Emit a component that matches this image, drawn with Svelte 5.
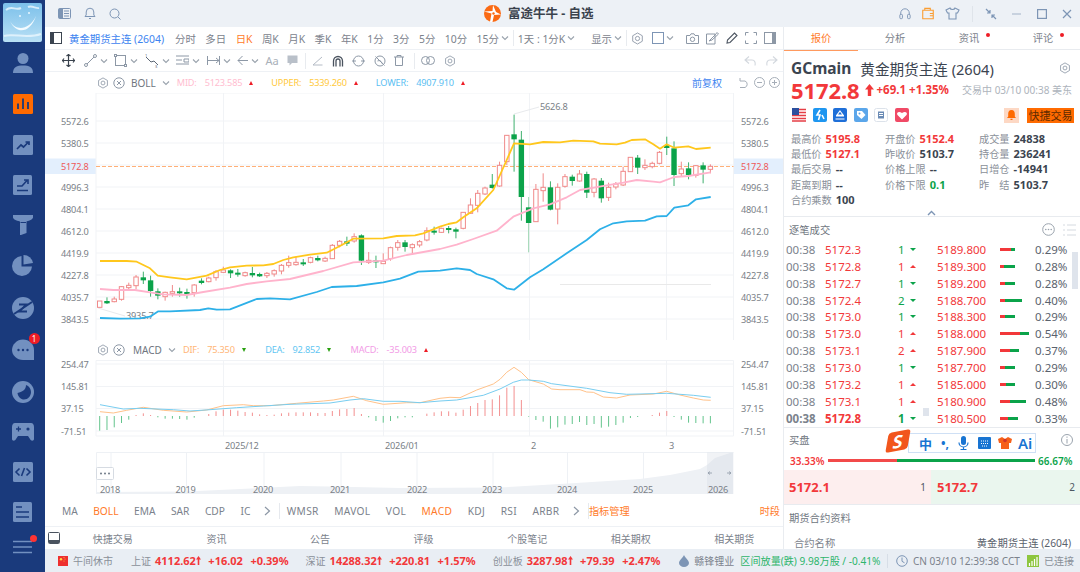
<script>
  const cx = (i) => 99.7 + 7.27 * i;
  const y1 = (z) => 100 + z / 3;
  const c = [
    ['r',603,603,622,622],['g',592,603,610,612],['r',590,597,605,607],['r',558,560,598,602],['r',548,556,563,567],['r',525,531,557,568],['g',515,532,541,552],['g',527,541,573,590],['g',565,574,587,598],['r',575,577,590,602],
    ['r',555,575,580,590],['g',563,574,580,590],['g',566,576,581,596],['r',552,555,578,590],['g',535,542,549,553],['r',530,534,545,547],['r',510,515,533,542],['r',500,510,517,519],['g',508,511,520,534],['g',507,518,524,530],
    ['r',515,518,527,530],['g',501,519,526,532],['g',518,522,529,531],['r',516,520,527,534],['r',508,512,522,530],['r',492,496,513,523],['r',467,488,496,503],['r',470,487,494,497],['g',477,487,492,498],['r',470,473,487,490],
    ['g',467,474,481,484],['r',470,475,483,486],['r',432,436,476,476],['r',420,424,436,442],['g',410,424,431,438],['r',400,410,423,428],['g',403,406,482,495],['r',456,481,487,492],['g',467,481,487,504],['r',460,484,491,491],
    ['r',440,443,476,482],['r',420,428,442,452],['g',420,427,441,455],['r',430,434,443,459],['r',420,425,435,442],['r',382,392,420,424],['g',380,392,398,404],['r',383,385,397,399],['g',378,384,388,400],['g',383,388,395,415],
    ['r',337,337,385,388],['r',295,315,340,342],['r',270,280,316,337],['r',260,264,282,285],['g',222,254,264,266],['r',185,196,258,260],['r',105,106,185,195],['g',44,103,118,215],['g',93,119,291,362],['g',291,322,369,457],
    ['r',252,268,365,366],['r',220,262,272,305],['g',244,262,329,331],['r',250,262,327,373],['r',222,230,259,263],['g',224,230,243,257],['r',210,222,243,245],['g',215,222,278,294],['r',234,237,277,292],['g',234,242,295,308],
    ['r',248,262,292,303],['r',246,252,261,268],['r',200,214,255,258],['r',172,172,215,216],['g',165,173,203,222],['r',178,196,203,210],['r',185,190,200,205],['r',153,157,190,193],['g',110,136,144,165],['g',124,145,225,258],
    ['r',185,207,221,228],['g',187,205,225,238],['r',195,197,226,233],['g',187,196,209,250],['r',193,199,208,220]
  ];
  const line = (a, b, oy) => {
    const p = a.map(([x, y]) => `${(90 + x / 3).toFixed(1)},${(oy + y / 3).toFixed(1)}`);
    const q = b.map(([x, y]) => `${(440 + x / 3).toFixed(1)},${(oy + y / 3).toFixed(1)}`);
    return p.concat(q).join(' ');
  };
  const upper = line([[30,483],[110,483],[140,485],[180,505],[203,527],[240,532],[290,538],[350,527],[390,510],[420,502],[470,497],[520,496],[550,492],[580,480],[610,472],[660,464],[710,458],[750,438],[790,416],[880,415],[920,408],[975,406],[1000,400]],
    [[0,380],[25,372],[50,367],[70,352],[110,325],[160,270],[180,225],[200,180],[222,130],[270,133],[310,126],[360,127],[400,122],[460,124],[480,131],[530,133],[555,128],[575,120],[615,118],[640,133],[660,146],[680,133],[703,143],[745,139],[768,147],[812,143]], 100);
  const mid = line([[30,567],[70,570],[135,570],[180,577],[220,583],[290,585],[340,576],[420,563],[470,552],[530,544],[600,537],[700,513],[790,487],[880,482],[950,465],[1050,447]],
    [[50,434],[100,417],[170,392],[220,350],[280,325],[330,313],[380,292],[420,270],[500,256],[550,248],[590,240],[640,245],[660,247],[703,231],[745,228],[812,217]], 100);
  const lower = line([[30,654],[90,656],[150,655],[180,650],[205,634],[240,634],[330,630],[355,625],[380,629],[420,628],[500,597],[540,595],[600,598],[680,576],[725,561],[800,558],[880,547],[930,536],[985,515],[1050,512]],
    [[50,505],[90,510],[110,522],[160,538],[200,565],[222,569],[270,532],[310,508],[380,460],[440,420],[480,388],[520,370],[560,364],[615,362],[650,349],[680,348],[703,323],[745,316],[768,298],[812,291]], 100);
  const dif = line([[30,230],[70,234],[110,226],[160,217],[220,226],[290,231],[350,225],[400,212],[460,209],[490,212],[540,212],[620,205],[700,198],[730,195],[790,184],[830,197],[880,208],[950,203],[990,203],[1050,190]],
    [[30,187],[60,188],[110,165],[160,147],[180,133],[200,112],[222,97],[244,112],[266,134],[310,147],[335,162],[360,164],[420,164],[440,171],[460,172],[490,186],[530,189],[570,180],[640,177],[680,169],[720,180],[760,189],[790,195],[812,196]], 335);
  const dea = line([[30,209],[100,222],[150,220],[250,224],[300,228],[360,224],[440,218],[520,213],[600,208],[720,204],[780,195],[820,191],[880,199],[930,199],[990,203],[1050,198]],
    [[50,195],[130,181],[180,162],[220,142],[244,135],[266,135],[310,139],[335,146],[440,160],[510,173],[560,178],[600,177],[680,175],[760,181],[812,187]], 335);
  const bars = [287,285,277,264,254,240,235,240,247,251,251,252,254,248,243,237,229,224,224,227,231,233,238,240,239,235,233,232,232,232,234,234,228,223,222,219,237,247,258,263,258,250,247,247,243,236,232,229,229,233,224,213,204,195,193,181,158,153,195,245,255,260,281,277,269,267,261,270,267,278,275,270,263,249,246,243,240,233,228,246,254,263,264,265,265];
  const hgrid = [121,143,165,187,209,231,253,275,297,319];
  const vgrid = [223.5,383.5,529.5,666.5];
  const leftLabels = [['5572.6',121],['5380.5',143],['4996.3',187],['4804.1',209],['4612.0',231],['4419.9',253],['4227.8',275],['4035.7',297],['3843.5',319]];
  const macdLabels = [['254.47',364],['145.81',386.5],['37.15',408.5],['-71.51',431]];
  const years = [[110,'2018'],[185.5,'2019'],[263,'2020'],[340,'2021'],[417,'2022'],[492,'2023'],[567,'2024'],[643,'2025'],[718,'2026']];
  const navLines = [111,186.5,264,341,417,493,567.5,643.5];
  const tabsA = ['分时','多日','日K','周K','月K','季K','年K','1分','3分','5分','10分','15分'];
  const indA = ['MA','BOLL','EMA','SAR','CDP','IC'];
  const indB = ['WMSR','MAVOL','VOL','MACD','KDJ','RSI','ARBR'];
  const bottomTabs = ['快捷交易','资讯','公告','评级','个股笔记','相关期权','相关期货'];
  const stats = [
    ['最高价','5195.8','r','开盘价','5152.4','r','成交量','24838','d'],
    ['最低价','5127.1','r','昨收价','5103.7','d','持仓量','236241','d'],
    ['最后交易','--','d','价格上限','--','d','日增仓','-14941','d'],
    ['距离到期','--','d','价格下限','0.1','g','昨　结','5103.7','d'],
    ['合约乘数','100','d','','','','','','']
  ];
  const ticks = [
    ['5172.3',1,'g','5189.800',11,4,'0.29%'],['5172.8',1,'r','5189.300',4,11,'0.28%'],['5172.7',1,'g','5189.200',5,10,'0.28%'],['5172.4',2,'g','5188.700',4.5,17,'0.40%'],
    ['5173.0',1,'g','5188.300',5,10,'0.29%'],['5173.0',1,'r','5188.000',20,9,'0.54%'],['5173.1',2,'r','5187.900',10,9,'0.37%'],['5173.0',1,'g','5187.700',5,10,'0.29%'],
    ['5173.2',1,'r','5185.000',6,9,'0.30%'],['5173.1',1,'r','5180.900',10,16,'0.48%'],['5172.8',1,'g','5180.500',8,10,'0.33%']
  ];
</script>

{#snippet chev()}
  <svg class="chev" width="8" height="6" viewBox="0 0 8 6"><path d="M1 1.5 4 4.5 7 1.5" fill="none" stroke="#9aa3ad" stroke-width="1.1"/></svg>
{/snippet}
{#snippet gear(s = 15)}
  <svg width={s} height={s} viewBox="0 0 16 16" fill="none" stroke="#8d98a6" stroke-width="1.1"><path d="M8 1.2 13.9 4.6V11.4L8 14.8 2.1 11.4V4.6Z"/><circle cx="8" cy="8" r="2.6"/></svg>
{/snippet}
{#snippet arrow()}
  <svg class="sarr" width="5" height="9" viewBox="0 0 5 9"><path d="M2.5 0 5 3.5H3.3V9H1.7V3.5H0Z" fill="#f2383a"/></svg>
{/snippet}

<div class="app">
  <aside class="side">
    <div class="logo">
      <svg width="39" height="39" viewBox="0 0 39 39">
        <defs><linearGradient id="sky" x1="0" y1="0" x2="0" y2="1"><stop offset="0" stop-color="#7cc0ea"/><stop offset="1" stop-color="#b9e0f5"/></linearGradient></defs>
        <rect width="39" height="39" rx="2" fill="url(#sky)"/>
        <path d="M7 18C12 28 26 28 33 13 28 29 14 33 7 18Z" fill="#f3fbff"/>
        <path d="M3 7C9 2 12 8 18 5M25 4C29 2 33 6 36 5M1 33C10 30 24 36 38 31" stroke="#e6f5fd" stroke-width="2" fill="none" opacity=".85"/>
        <circle cx="17" cy="13" r="1" fill="#eaf7ff"/><circle cx="26" cy="10" r="1" fill="#eaf7ff"/>
      </svg>
    </div>
    <nav class="nav">
      <svg width="20" height="22" viewBox="0 0 20 22" fill="#7290c0"><circle cx="10" cy="6.5" r="5.5"/><path d="M0 21C0 15 4 13.5 10 13.5S20 15 20 21Z"/></svg>
      <svg width="20" height="20" viewBox="0 0 20 20"><rect width="20" height="20" rx="1.5" fill="#ff6a00"/><path d="M5 15V9.5M10 15V4.5M15 15V8" stroke="#1a3a7c" stroke-width="1.8"/></svg>
      <svg width="20" height="20" viewBox="0 0 20 20"><rect width="20" height="20" rx="1.5" fill="#7290c0"/><path d="M4 14 8 10 10.5 12 15.5 7M12.5 7H16V10" stroke="#1a3a7c" stroke-width="1.7" fill="none"/></svg>
      <svg width="19" height="20" viewBox="0 0 19 20"><rect width="19" height="20" rx="1.5" fill="#7290c0"/><path d="M4 11H9L14 5.5M11 5H15V9M4 15.5H15" stroke="#1a3a7c" stroke-width="1.6" fill="none"/></svg>
      <svg width="20" height="20" viewBox="0 0 20 20" fill="#7290c0"><path d="M0 0H20V2.5C20 4 17 5.5 13.5 6.5V18L8 20H7V6.5C3 5.5 0 4 0 2.5Z"/><path d="M7.5 7.5H13" stroke="#1a3a7c"/></svg>
      <svg width="21" height="21" viewBox="0 0 21 21" fill="#7290c0"><path d="M9.5 1A10 10 0 1 0 20 11.5H9.5Z"/><path d="M11.5 0A9.5 9.5 0 0 1 21 8L11.5 9.5Z"/></svg>
      <svg width="22" height="22" viewBox="0 0 22 22"><circle cx="11" cy="11" r="11" fill="#7290c0"/><path d="M2 17 20 5" stroke="#1a3a7c" stroke-width="2"/><path d="M7 7.5H14L7.5 14.5H15" stroke="#1a3a7c" stroke-width="1.8" fill="none"/></svg>
      <div class="chat">
        <svg width="22" height="22" viewBox="0 0 22 22" fill="#7290c0"><path d="M11 0.5C17 0.5 22 5 22 11V21H11C5 21 0 16.5 0 11S5 .5 11 .5Z"/><g fill="#1a3a7c"><circle cx="6.5" cy="11" r="1.2"/><circle cx="11" cy="11" r="1.2"/><circle cx="15.5" cy="11" r="1.2"/></g></svg>
        <span class="badge">1</span>
      </div>
      <svg width="22" height="22" viewBox="0 0 22 22"><circle cx="11" cy="11" r="11" fill="#7290c0"/><path d="M14 4C14 9 10 11 5.5 12 6 16 9 18.5 12 18.5 16 18.5 19 15 19 11 19 8 17 5 14 4Z" fill="#1a3a7c"/></svg>
      <svg width="22" height="18" viewBox="0 0 22 18" fill="#7290c0"><path d="M3 0H19C21 0 22 2 22 4V16C22 18 19 18.5 18 16L16 13H6L4 16C3 18.5 0 18 0 16V4C0 2 1 0 3 0Z"/><path d="M4 6H9M6.5 3.5V8.5" stroke="#1a3a7c" stroke-width="1.3"/><circle cx="16" cy="6" r="1.6" fill="#1a3a7c"/></svg>
      <svg width="20" height="20" viewBox="0 0 20 20"><rect width="20" height="20" rx="1.5" fill="#7290c0"/><path d="M6.5 6.5 3 10 6.5 13.5M13.5 6.5 17 10 13.5 13.5M11.5 6 8.5 14" stroke="#1a3a7c" stroke-width="1.6" fill="none"/></svg>
      <svg width="19" height="20" viewBox="0 0 19 20"><rect width="19" height="20" rx="1.5" fill="#7290c0"/><path d="M3 5H9M3 10H16M3 15H16" stroke="#1a3a7c" stroke-width="1.5" fill="none"/></svg>
    </nav>
    <div class="menu">
      <svg width="19" height="14" viewBox="0 0 19 14"><path d="M0 1.5H19M0 7H19M0 12.5H19" stroke="#7290c0" stroke-width="1.5"/></svg>
      <span class="menu-dot"></span>
    </div>
  </aside>

  <div class="main">
    <header class="title">
      <div class="tleft">
        <svg width="13" height="11" viewBox="0 0 13 11"><rect x=".5" y=".5" width="12" height="10" rx="1" fill="none" stroke="#7d95b5"/><path d="M1 1H4.5V10H1ZM6 3H11M6 5.5H11M6 8H11" fill="#7d95b5" stroke="#7d95b5"/></svg>
        <svg width="12" height="13" viewBox="0 0 12 13" fill="none" stroke="#7d95b5"><path d="M1 9.5H11L9.8 8V5A3.8 3.8 0 0 0 2.2 5V8ZM5 11.5H7"/></svg>
        <svg width="12" height="12" viewBox="0 0 12 12" fill="none" stroke="#7d95b5"><circle cx="5.5" cy="5.5" r="4.5"/><path d="M9 9 11.5 11.5"/></svg>
      </div>
      <div class="tcenter">
        <svg width="17" height="17" viewBox="0 0 17 17"><circle cx="8.5" cy="8.5" r="8.5" fill="#fa6a14"/><path d="M0 6.5 7.5 8.5 6 17H8.5L10 10 17 9.5 12 7 9 0 8.5 6Z" fill="#fff"/><circle cx="9.5" cy="8.5" r="1.2" fill="#fa6a14"/></svg>
        <span>富途牛牛 - 自选</span>
      </div>
      <div class="tright">
        <svg width="12" height="13" viewBox="0 0 14 13" fill="none" stroke="#7d95b5" stroke-width="1.1"><path d="M2 8V6A5 5 0 0 1 12 6V8"/><rect x="1" y="7.5" width="3" height="5" rx="1"/><rect x="10" y="7.5" width="3" height="5" rx="1"/></svg>
        <svg width="12" height="13" viewBox="0 0 13 13" fill="none" stroke="#fa9d32" stroke-width="1.2"><path d="M.8 3H12.2V12.2H.8ZM3 3V1H9V3M8.5 6.5H12.2V9H8.5"/></svg>
        <svg width="15" height="13" viewBox="0 0 15 13" fill="none" stroke="#7d95b5" stroke-width="1.1"><path d="M5 1 1 3 2.5 6H4V12H11V6H12.5L14 3 10 1C9.5 3 5.5 3 5 1Z"/></svg>
        <i class="tsep"></i>
        <svg width="12" height="12" viewBox="0 0 12 12" fill="none" stroke="#7d95b5" stroke-width="1.2"><path d="M1 1 5 5M2 5H5V2M11 11 7 7M7 10V7H10"/></svg>
        <svg class="tmin" width="9" height="2" viewBox="0 0 9 2"><path d="M0 1H9" stroke="#b8c5d6" stroke-width="1.4"/></svg>
        <svg class="tmax" width="10" height="10" viewBox="0 0 10 10"><rect x=".6" y=".6" width="8.8" height="8.8" fill="none" stroke="#7d95b5" stroke-width="1.2"/></svg>
        <svg class="tx" width="10" height="10" viewBox="0 0 10 10"><path d="M1 1 9 9M9 1 1 9" stroke="#7d95b5" stroke-width="1.2"/></svg>
      </div>
    </header>

    <div class="body">
      <section class="left">
        <div class="row1">
          <svg class="pane" width="12" height="12" viewBox="0 0 12 12"><rect x=".5" y=".5" width="11" height="11" fill="none" stroke="#3b4450"/><rect x="1" y="1" width="3" height="10" fill="#3b4450"/></svg>
          <span class="sym">黄金期货主连 (2604)</span>
          <div class="tabs">
            {#each tabsA as t}<span class:on={t === '日K'}>{t}</span>{/each}
          </div>
          {@render chev()}
          <i class="vsep"></i>
          <span class="ses">1天 : 1分K</span>
          {@render chev()}
          <span class="show">显示</span>
          {@render chev()}
          <i class="vsep"></i>
          {@render gear(13)}
          <svg class="box" width="12" height="12" viewBox="0 0 12 12"><rect x=".5" y=".5" width="11" height="11" fill="none" stroke="#7d95b5"/></svg>
          {@render chev()}
          <span class="r1end">
            <svg width="13" height="11" viewBox="0 0 13 11" fill="none" stroke="#8d98a6"><path d="M.5 2.5H4L5 .8H8L9 2.5H12.5V10.5H.5Z"/><circle cx="6.5" cy="6.3" r="2.2"/></svg>
            <svg width="13" height="13" viewBox="0 0 13 13" fill="none" stroke="#8d98a6"><path d="M.5 2H9V12H.5ZM3 9 9 3 11 .5 12.5 2 6 8 3 9Z"/></svg>
            <svg width="12" height="12" viewBox="0 0 12 12" fill="none" stroke="#4d5662" stroke-width="1.1"><path d="M1 11 1.5 8 8.5 1 11 3.5 4 10.5Z"/></svg>
            <svg width="12" height="12" viewBox="0 0 12 12" fill="none" stroke="#8d98a6"><path d="M.5 3.5V.5H3.5M8.5 .5H11.5V3.5M.5 8.5V11.5H3.5M8.5 11.5H11.5V8.5"/></svg>
            <svg width="12" height="12" viewBox="0 0 12 12"><rect x=".5" y=".5" width="11" height="11" fill="none" stroke="#8d98a6"/><rect x="8" y="1" width="3" height="10" fill="#8d98a6"/></svg>
          </span>
        </div>

        <div class="row2">
          <svg width="13" height="13" viewBox="0 0 13 13" fill="none" stroke="#39424d" stroke-width="1.2"><path d="M6.5 0V13M0 6.5H13M4.5 2 6.5 .5 8.5 2M4.5 11 6.5 12.5 8.5 11M2 4.5 .5 6.5 2 8.5M11 4.5 12.5 6.5 11 8.5"/></svg>
          <span class="t2 first"><svg width="13" height="13" viewBox="0 0 13 13" fill="none" stroke="#8d98a6"><circle cx="2" cy="11" r="1.5"/><circle cx="11" cy="2" r="1.5"/><path d="M3 10 10 3"/></svg>{@render chev()}</span>
          <span class="t2"><svg width="13" height="13" viewBox="0 0 13 13" fill="none" stroke="#8d98a6"><rect x="1.5" y="1.5" width="10" height="10"/><rect x=".5" y=".5" width="2" height="2" fill="#fff"/><rect x="10.5" y="10.5" width="2" height="2" fill="#fff"/></svg>{@render chev()}</span>
          <span class="t2"><svg width="14" height="14" viewBox="0 0 14 14" fill="none" stroke="#5d6774"><path d="M1 3 6 8 9 7 13 11"/><text x="0" y="3" font-size="4" fill="#5d6774" stroke="none">1</text><text x="10" y="14" font-size="4" fill="#5d6774" stroke="none">3</text></svg>{@render chev()}</span>
          <span class="t2"><svg width="13" height="11" viewBox="0 0 13 11" fill="none" stroke="#8d98a6"><path d="M0 1H13M0 5H6M8 4H13V7H8ZM0 9H13"/></svg>{@render chev()}</span>
          <span class="t2"><svg width="13" height="11" viewBox="0 0 13 11" fill="none" stroke="#8d98a6"><path d="M.5 1V10M12.5 1V10M1 5.5H12M9 3 12 5.5 9 8"/></svg>{@render chev()}</span>
          <span class="t2"><svg width="11" height="11" viewBox="0 0 11 11" fill="none" stroke="#8d98a6"><path d="M11 5.5H1M5.5 1 1 5.5 5.5 10"/></svg>{@render chev()}</span>
          <span class="aa">Aa</span>
          <svg class="bub" width="11" height="11" viewBox="0 0 11 11" fill="#b9c0c9"><path d="M.5 .5H10.5V8H5L2.5 10.5V8H.5Z"/></svg>
          <i class="vsep2"></i>
          <svg width="11" height="10" viewBox="0 0 11 10" fill="none" stroke="#b4bbc5"><path d="M10 1 1 9H10.5"/></svg>
          <svg class="tool" width="12" height="12" viewBox="0 0 12 12" fill="none" stroke="#4a535f" stroke-width="1.3"><path d="M1.5 11.5V6A4.5 4.5 0 0 1 10.5 6V11.5M4 11.5V6A2 2 0 0 1 8 6V11.5"/></svg>
          <svg class="tool" width="13" height="12" viewBox="0 0 13 12" fill="none" stroke="#8d98a6"><ellipse cx="6.5" cy="6" rx="5" ry="5"/><path d="M0 6H4M9 6H13"/></svg>
          <svg class="tool" width="12" height="12" viewBox="0 0 12 12" fill="none" stroke="#8d98a6"><circle cx="6" cy="6" r="5"/><path d="M1.5 1.5 10.5 10.5M3.5 6A3 3 0 0 1 8 8.5"/></svg>
          <svg class="tool" width="10" height="11" viewBox="0 0 10 11" fill="none" stroke="#8d98a6"><path d="M0 2H10M3 2V.5H7V2M1.5 2V10.5H8.5V2"/></svg>
          <i class="vsep2 far"></i>
          <svg width="14" height="9" viewBox="0 0 14 9" fill="none" stroke="#8d98a6"><circle cx="4.5" cy="4.5" r="4"/><circle cx="9.5" cy="4.5" r="4"/></svg>
          <span class="g2">{@render gear(12)}</span>
          <span class="r2end">
            <svg width="12" height="10" viewBox="0 0 12 10" fill="none" stroke="#d3d8de" stroke-width="1.1"><path d="M5 .5 1 4 5 7.5M1 4H8C11 4 11.5 7 11 9.5"/></svg>
            <svg width="12" height="10" viewBox="0 0 12 10" fill="none" stroke="#d3d8de" stroke-width="1.1"><path d="M7 .5 11 4 7 7.5M11 4H4C1 4 .5 7 1 9.5"/></svg>
          </span>
        </div>

        <div class="legend bollrow">
          {@render gear(12)}
          <svg width="12" height="12" viewBox="0 0 12 12" fill="none" stroke="#8d98a6"><circle cx="6" cy="6" r="5.2"/><path d="M4 4 8 8M8 4 4 8"/></svg>
          <b class="ind">BOLL</b>{@render chev()}
          <span class="mid first">MID:</span><span class="mid v">5123.585</span><i class="up"></i>
          <span class="upp next">UPPER:</span><span class="upp v">5339.260</span><i class="up"></i>
          <span class="low next">LOWER:</span><span class="low v">4907.910</span><i class="up"></i>
          <span class="adj">前复权</span>
          <svg width="11" height="11" viewBox="0 0 11 11" fill="none" stroke="#a6aeb8"><path d="M1 1V4H6A3.5 3.5 0 0 1 6 10.5H1"/></svg>
          <svg width="11" height="11" viewBox="0 0 11 11" fill="none" stroke="#a6aeb8"><circle cx="5.5" cy="5.5" r="5"/><path d="M3 5.5H8"/></svg>
          <svg width="11" height="11" viewBox="0 0 11 11" fill="none" stroke="#a6aeb8"><circle cx="5.5" cy="5.5" r="5"/><path d="M3 5.5H8M5.5 3V8"/></svg>
        </div>

        <svg class="plot" width="738" height="247" viewBox="45 93 738 247">
          <rect x="45" y="158.5" width="51" height="15.5" fill="#e3effd"/>
          <rect x="733.5" y="158.5" width="50" height="15.5" fill="#e3effd"/>
          <g stroke="#f1f3f6" fill="none">
            {#each hgrid as y}<path d="M96 {y}H733.5"/>{/each}
            {#each vgrid as x}<path d="M{x} 93V340"/>{/each}
            <path d="M96 93V340M733.5 93V340M96 93H733.5"/>
          </g>
          <path d="M560 284.5H711" stroke="#e9e9e9"/>
          <path d="M514 114 539 107M98 308 125 316" stroke="#e8eaed"/>
          <text class="ax" x="540" y="109.5">5626.8</text>
          <text class="ax" x="126" y="319">3935.7</text>
          <path d="M96 166.5H733.5" stroke="#ffb078" stroke-dasharray="4 2"/>
          {#each c as [t, wt, bt, bb, wb], i}
            {@const x = cx(i)}
            <path d="M{x} {y1(wt)}V{y1(wb)}" stroke={t === 'r' ? '#f08a8a' : (i === 59 ? '#9ed6b3' : '#3fb06e')}/>
            {#if t === 'r'}
              <rect x={x - 2.2} y={y1(bt)} width="4.4" height={Math.max(y1(bb) - y1(bt), 1)} fill="#fff" stroke="#f08a8a"/>
            {:else}
              <rect x={x - 2.7} y={y1(bt)} width="5.4" height={Math.max(y1(bb) - y1(bt), 2)} fill="#0ba34a"/>
            {/if}
          {/each}
          <polyline points={lower} fill="none" stroke="#2db0e8" stroke-width="1.8" stroke-linejoin="round"/>
          <polyline points={mid} fill="none" stroke="#ffb3cc" stroke-width="1.8" stroke-linejoin="round"/>
          <polyline points={upper} fill="none" stroke="#ffc71c" stroke-width="1.8" stroke-linejoin="round"/>
          {#each leftLabels as [l, y]}
            <text class="ax" x="61" y={y + 3.5}>{l}</text>
            <text class="ax" x="741" y={y + 3.5}>{l}</text>
          {/each}
          <text class="ax red" x="61" y="170">5172.8</text>
          <text class="ax red" x="741" y="170">5172.8</text>
        </svg>

        <div class="legend macdrow">
          {@render gear(12)}
          <svg width="12" height="12" viewBox="0 0 12 12" fill="none" stroke="#8d98a6"><circle cx="6" cy="6" r="5.2"/><path d="M4 4 8 8M8 4 4 8"/></svg>
          <b class="ind">MACD</b>{@render chev()}
          <span class="dif first">DIF:</span><span class="dif v">75.350</span><i class="dn"></i>
          <span class="dea next">DEA:</span><span class="dea v">92.852</span><i class="dn"></i>
          <span class="mac next">MACD:</span><span class="mac v">-35.003</span><i class="up"></i>
        </div>

        <svg class="plot" width="738" height="95" viewBox="45 357 738 95">
          <g stroke="#f1f3f6" fill="none">
            {#each [364,386.5,408.5,431] as y}<path d="M96 {y}H733.5"/>{/each}
            {#each vgrid as x}<path d="M{x} 360.5V436"/>{/each}
            <path d="M96 360.5H733.5V436H96Z"/>
          </g>
          {#each bars as b, i}
            {#if b !== 243}
              <path d="M{cx(i)} {335 + 243 / 3}V{335 + b / 3}" stroke={b < 243 ? '#f39090' : '#63c48c'}/>
            {/if}
          {/each}
          <polyline points={dif} fill="none" stroke="#ffc28a" stroke-linejoin="round"/>
          <polyline points={dea} fill="none" stroke="#78cdf0" stroke-linejoin="round"/>
          {#each macdLabels as [l, y]}
            <text class="ax" x="61" y={y + 3.5}>{l}</text>
            <text class="ax" x="741" y={y + 3.5}>{l}</text>
          {/each}
          <text class="ax" x="225" y="448.5">2025/12</text>
          <text class="ax" x="385" y="448.5">2026/01</text>
          <text class="ax" x="531" y="448.5">2</text>
          <text class="ax" x="669" y="448.5">3</text>
        </svg>

        <svg class="plot" width="738" height="43" viewBox="45 452 738 43">
          <path d="M96 494V492L186 491.5 230 489.5 300 486 330 486.5 400 488 500 487.5 560 484 640 479 670 475 700 469 707 465 715 458 733 452V494Z" fill="#eef1f5"/>
          <g stroke="#eef1f5" fill="none">
            {#each navLines as x}<path d="M{x} 452.5V494"/>{/each}
            <path d="M96.5 494V452.5H733.5"/>
          </g>
          <rect x="707" y="452.5" width="26.5" height="41.5" fill="#d0d6e0" opacity=".3"/>
          <path d="M708 473H712M708 473 710 471.5M708 473 710 474.5M727 473H731M731 473 729 471.5M731 473 729 474.5" stroke="#8e98a6" stroke-width=".8"/>
          <rect x="96.5" y="467.5" width="17" height="12" rx="1" fill="#fff" stroke="#d6dbe2"/>
          <g fill="#6f7a88"><circle cx="101" cy="473.5" r="1"/><circle cx="105" cy="473.5" r="1"/><circle cx="109" cy="473.5" r="1"/></g>
          {#each years as [x, t]}
            <text class="ax" x={x} y="493" text-anchor="middle">{t}</text>
          {/each}
        </svg>

        <div class="indic">
          {#each indA as t}<span class:on={t === 'BOLL'}>{t}</span>{/each}
          <svg class="gt" width="7" height="10" viewBox="0 0 7 10"><path d="M1 1 5.5 5 1 9" fill="none" stroke="#8d98a6" stroke-width="1.2"/></svg>
          <i class="isep"></i>
          {#each indB as t}<span class="wide" class:on={t === 'MACD'}>{t}</span>{/each}
          <svg class="gt" width="7" height="10" viewBox="0 0 7 10"><path d="M1 1 5.5 5 1 9" fill="none" stroke="#8d98a6" stroke-width="1.2"/></svg>
          <i class="isep"></i>
          <span class="on mgr">指标管理</span>
          <span class="on seg">时段</span>
        </div>

        <div class="btabs">
          <svg width="12" height="12" viewBox="0 0 12 12"><rect x=".5" y=".5" width="11" height="11" rx="1" fill="none" stroke="#4a535f"/><rect x="1" y="8" width="10" height="3" fill="#4a535f"/></svg>
          <div class="blist">{#each bottomTabs as t}<span>{t}</span>{/each}</div>
        </div>
      </section>

      <section class="right">
        <div class="rtabs">
          <span class="active">报价</span>
          <span>分析</span>
          <span>资讯<i class="rd"></i></span>
          <span>评论<i class="rd"></i></span>
        </div>
        <div class="quote">
          <div class="qname"><b>GCmain</b><span>黄金期货主连 (2604)</span><em>{@render gear(12)}</em></div>
          <div class="qprice">
            <b class="big">5172.8</b>
            <svg width="9" height="12" viewBox="0 0 9 12"><path d="M4.5 0 9 5.5H6.2V12H2.8V5.5H0Z" fill="#f2383a"/></svg>
            <b class="chg">+69.1</b><b class="chg">+1.35%</b>
            <span class="tm">交易中 03/10 00:38 美东</span>
          </div>
          <div class="qicons">
            <svg width="14" height="14" viewBox="0 0 14 14"><rect width="14" height="14" rx="1.5" fill="#fff"/><path d="M0 1.5H14M0 4.5H14M0 7.5H14M0 10.5H14M0 13H14" stroke="#e53e46" stroke-width="1.5"/><rect width="7" height="7" fill="#2c4f9e"/></svg>
            <svg width="14" height="14" viewBox="0 0 14 14"><rect width="14" height="14" rx="2" fill="#1e96f0"/><path d="M7 2 4 7H7L5.5 12M9 7 11 11" stroke="#fff" stroke-width="1.6" fill="none"/></svg>
            <svg width="14" height="14" viewBox="0 0 14 14"><rect width="14" height="14" rx="2" fill="#1e6fd8"/><path d="M7 3 10 7H4ZM3 8H11M2.5 11H11.5" stroke="#fff" stroke-width="1.1" fill="none"/></svg>
            <svg width="14" height="14" viewBox="0 0 14 14"><rect width="14" height="14" rx="2" fill="#5ba6ea"/><path d="M3 3H8L11.5 7 7.5 11 3 7Z" fill="#fff"/><circle cx="5.5" cy="5.5" r="1" fill="#5ba6ea"/></svg>
            <svg width="14" height="14" viewBox="0 0 14 14"><rect x=".5" y=".5" width="13" height="13" rx="2" fill="#fff" stroke="#dce2ea"/><path d="M4 3.5H10V10.5H4Z" fill="#6a8bb5"/><path d="M5 5.5H9M5 7.5H9" stroke="#fff"/></svg>
            <svg width="14" height="14" viewBox="0 0 14 14"><rect width="14" height="14" rx="2" fill="#f04a66"/><path d="M7 11.5 2.5 7C1 5 3.5 2.5 7 5 10.5 2.5 13 5 11.5 7Z" fill="#fff"/></svg>
            <span class="qspace"></span>
            <span class="bell"><svg width="9" height="10" viewBox="0 0 9 10" fill="#ff6a00"><path d="M4.5 0C7 0 7.8 2 7.8 4V6.5L9 8H0L1.2 6.5V4C1.2 2 2 0 4.5 0ZM3.5 8.8H5.5V10H3.5Z"/></svg></span>
            <span class="fast">快捷交易</span>
          </div>
          <div class="stats">
            {#each stats as r}
              <div class="srow">
                {#each [0, 3, 6] as k}
                  <span class="cell"><span class="lb">{r[k]}</span>{#if r[k]}<b class={r[k + 2]}>{r[k + 1]}</b>{/if}</span>
                {/each}
              </div>
            {/each}
          </div>
          <svg class="collapse" width="9" height="6" viewBox="0 0 9 6"><path d="M1 5 4.5 1.5 8 5" fill="none" stroke="#7d95b5" stroke-width="1.4"/></svg>
        </div>

        <div class="tickhead">
          <span>逐笔成交</span>
          <svg width="13" height="13" viewBox="0 0 13 13" fill="none" stroke="#9aa3ad"><circle cx="6.5" cy="6.5" r="5.8"/><g fill="#9aa3ad" stroke="none"><circle cx="3.8" cy="6.5" r=".8"/><circle cx="6.5" cy="6.5" r=".8"/><circle cx="9.2" cy="6.5" r=".8"/></g></svg>
          <svg width="13" height="12" viewBox="0 0 13 12" stroke="#d5dae0"><path d="M0 1H2M4 1H13M0 6H2M4 6H13M0 11H2M4 11H13"/></svg>
        </div>
        <div class="ticks">
          {#each ticks as [p, q, d, l, a, b, pct], i}
            <div class="tr" class:last={i === ticks.length - 1}>
              <span class="t">00:38</span>
              <span class="p">{p}</span>
              <span class="q {d}">{q}</span>
              <i class={d === 'r' ? 'tu' : 'td'}></i>
              <span class="l">{l}</span>
              <span class="bar"><i class="br" style="width:{a}px"></i><i class="bg" style="width:{b}px"></i></span>
              <span class="pc">{pct}</span>
            </div>
          {/each}
          <i class="thumb"></i>
          <i class="sq"></i>
        </div>

        <div class="buy">
          <div class="bh"><span>买盘</span>
            <svg width="12" height="12" viewBox="0 0 12 12" fill="none" stroke="#9aa3ad"><circle cx="6" cy="6" r="5.5"/><path d="M6 5V9.5M6 2.5V3.8"/></svg>
          </div>
          <div class="ratio"><b class="rr">33.33%</b><span class="track"><i class="tr-r"></i><i class="tr-g"></i></span><b class="gg">66.67%</b></div>
          <div class="ob">
            <div class="bid"><b>5172.1</b><span>1</span></div>
            <div class="ask"><b>5172.7</b><span>2</span></div>
          </div>
          <div class="info">期货合约资料</div>
          <div class="kv"><span>合约名称</span><span>黄金期货主连 (2604)</span></div>
        </div>

        <div class="ime">
          <span class="ime-s">S</span>
          <div class="ime-bar">
            <span class="imz">中</span>
            <span class="imd">•,</span>
            <svg width="11" height="14" viewBox="0 0 11 14" fill="#1874d2"><rect x="3" y="0" width="5" height="9" rx="2.5"/><path d="M1 6.5A4.5 4.5 0 0 0 10 6.5M5.5 11V13.5M2.5 13.5H8.5" fill="none" stroke="#1874d2" stroke-width="1.2"/></svg>
            <svg width="13" height="12" viewBox="0 0 13 12"><rect width="13" height="12" rx="1" fill="#1874d2"/><path d="M3 4H10M3 6.5H10M4 9H9" stroke="#fff" stroke-dasharray="1 1"/></svg>
            <svg class="shirt" width="14" height="12" viewBox="0 0 14 12"><path d="M4 0 0 2 1 6H3V12H11V6H13L14 2 10 0 7 2Z" fill="#f6601a"/><circle cx="7" cy="3.5" r="1.8" fill="#d0352a"/></svg>
            <span class="ai">Ai</span>
          </div>
        </div>
      </section>
    </div>

    <footer class="status">
      <svg class="flag" width="10" height="10" viewBox="0 0 10 10"><rect width="10" height="10" fill="#ee2f2f"/><circle cx="3" cy="3.2" r="1.2" fill="#ffd83d"/><g fill="#ffd83d"><circle cx="6" cy="1.5" r=".5"/><circle cx="7" cy="3" r=".5"/><circle cx="6" cy="5" r=".5"/></g></svg>
      <span class="s-mk">午间休市</span>
      <span class="s-lb sh">上证</span>
      <b class="px">4112.62{@render arrow()}</b><b>+16.02</b><b>+0.39%</b>
      <span class="s-lb">深证</span>
      <b class="px">14288.32{@render arrow()}</b><b>+220.81</b><b>+1.57%</b>
      <span class="s-lb">创业板</span>
      <b class="px">3287.98{@render arrow()}</b><b>+79.39</b><b>+2.47%</b>
      <svg class="drop" width="10" height="12" viewBox="0 0 10 12" fill="#7d95b5"><path d="M5 0C6 3 10 5 10 8A5 4 0 0 1 0 8C0 5 4 3 5 0Z"/></svg>
      <span class="s-gf">赣锋锂业</span>
      <span class="s-gn">区间放量(跌) 9.98万股 / -0.41%</span>
      <i class="s-sep"></i>
      <svg width="12" height="12" viewBox="0 0 12 12" fill="none" stroke="#7d95b5"><circle cx="6" cy="6" r="5.3"/><path d="M6 2.5V6.3L8.5 7.8"/></svg>
      <span class="s-tm">CN 03/10 12:39:38 CCT</span>
      <svg class="conn" width="12" height="12" viewBox="0 0 12 12"><rect width="12" height="12" fill="#8ec63f"/><path d="M2.5 11V8M5 11V6M7.5 11V4M10 11V2" stroke="#fff" stroke-width="1.2"/></svg>
      <span class="s-cn">已连接</span>
    </footer>
  </div>
</div>

<style>
  :global(body) { margin: 0; background: #fff; }
  .app { display: flex; width: 1080px; height: 572px; overflow: hidden; font-family: "Noto Sans", "Noto Sans CJK SC", sans-serif; font-size: 10.3px; color: #6f7680; }
  i { font-style: normal; display: block; }
  svg { display: block; flex: none; }

  .side { width: 45px; flex: none; background: #1a3a7c; display: flex; flex-direction: column; align-items: center; position: relative; }
  .logo { margin-top: 3px; height: 39px; }
  .nav { display: flex; flex-direction: column; align-items: center; margin-top: 10px; height: 470px; justify-content: space-between; }
  .chat { position: relative; }
  .badge { position: absolute; left: 17px; top: -6px; width: 11px; height: 11px; border-radius: 50%; background: #ee1c25; color: #fff; font-size: 8px; line-height: 11px; text-align: center; }
  .menu { position: absolute; top: 540px; left: 13px; }
  .menu-dot { position: absolute; left: 17px; top: -5px; width: 7px; height: 7px; border-radius: 50%; background: #f33; }

  .main { flex: 1; display: flex; flex-direction: column; min-width: 0; }
  .title { height: 27px; flex: none; background: #edf1f6; display: flex; align-items: center; position: relative; }
  .tleft { display: flex; align-items: center; gap: 13px; margin-left: 13px; }
  .tcenter { position: absolute; left: 439px; top: 5px; display: flex; align-items: center; gap: 7px; font-size: 12.5px; font-weight: 700; color: #3a424d; line-height: 17px; }
  .tright { margin-left: auto; margin-right: 8px; display: flex; align-items: center; gap: 11px; }
  .tsep { width: 1px; height: 16px; background: #dfe4ea; margin-left: 1px; margin-right: 1px; }
  .tmin { margin-left: 4px; }
  .tmax { margin-left: 5px; }
  .tx { margin-left: 4px; }

  .body { flex: 1; display: flex; min-height: 0; }
  .left { width: 738px; flex: none; display: flex; flex-direction: column; }

  .row1 { height: 23px; flex: none; display: flex; align-items: center; border-bottom: 1px solid #eef1f5; box-sizing: border-box; padding-left: 5px; font-size: 10.4px; }
  .sym { color: #3d84f0; margin-left: 7px; white-space: nowrap; }
  .tabs { display: flex; gap: 9.5px; margin-left: 11px; color: #7b828c; white-space: nowrap; }
  .tabs .on { color: #ff7a2a; }
  .chev { margin-left: 2px; }
  .vsep { width: 1px; height: 16px; background: #e8ebef; margin: 0 4px; }
  .ses, .show { color: #7b828c; white-space: nowrap; }
  .show { margin-left: 16px; }
  .box { margin-left: 8px; }
  .r1end { display: flex; align-items: center; gap: 7px; margin-left: 12px; }

  .row2 { height: 22px; flex: none; display: flex; align-items: center; gap: 6.5px; padding-left: 17px; border-bottom: 1px solid #eef1f5; box-sizing: border-box; }
  .t2 { display: flex; align-items: center; gap: 3px; }
  .t2 :global(.chev) { margin-left: 0; }
  .t2.first { margin-left: 2px; }
  .aa { color: #a9b0b9; font-size: 11px; }
  .bub { margin-left: 2px; }
  .vsep2 { width: 1px; height: 16px; background: #e8ebef; }
  .tool { margin-left: 2px; }
  .vsep2.far { margin-left: 3px; }
  .g2 { margin-left: 2px; }
  .r2end { margin-left: auto; margin-right: 5px; display: flex; gap: 10px; }

  .legend { flex: none; display: flex; align-items: center; gap: 4px; box-sizing: border-box; white-space: nowrap; font-size: 9.2px; letter-spacing: -.2px; }
  .bollrow { height: 21px; padding-left: 52px; }
  .macdrow { height: 17px; padding-left: 52px; padding-top: 2px; }
  .ind { font-weight: 400; color: #6f7680; margin-left: 2px; font-size: 10px; letter-spacing: 0; }
  .macdrow .ind { margin-left: 4px; }
  .v { margin-left: 4px; }
  .first { margin-left: 3px; }
  .next { margin-left: 14px; }
  .macdrow .next { margin-left: 15.5px; }
  .up { width: 0; height: 0; border: 2.5px solid transparent; border-top: 0; border-bottom: 4px solid #ee1c25; margin-left: 3px; }
  .dn { width: 0; height: 0; border: 2.5px solid transparent; border-bottom: 0; border-top: 4px solid #2aa010; margin-left: 3px; }
  .mid { color: #ffbdd0; }
  .upp { color: #ffc93c; }
  .low { color: #5cc0f2; }
  .dif { color: #ffb676; }
  .dea { color: #62c6f2; }
  .mac { color: #f29be6; }
  .adj { color: #3d84f0; margin-left: auto; margin-right: 13px; font-size: 10px; letter-spacing: 0; }
  .bollrow > svg:last-child { margin-right: 3px; }

  .plot { flex: none; }
  .ax { font-size: 9.2px; letter-spacing: -.2px; fill: #7a7f87; }
  .ax.red { fill: #ee5a5a; }

  .indic { height: 32px; flex: none; display: flex; align-items: center; gap: 15.5px; padding-left: 17px; font-size: 10.2px; color: #7b828c; border-bottom: 1px solid #eef1f5; box-sizing: border-box; white-space: nowrap; }
  .indic .on { color: #ff7a2a; }
  .wide { letter-spacing: .3px; }
  .isep { width: 1px; height: 16px; background: #e6e9ee; margin-left: -7px; margin-right: -9px; }
  .gt { margin-left: -2px; }
  .mgr { margin-left: -7px; }
  .seg { margin-left: auto; margin-right: 3px; }

  .btabs { height: 22px; flex: none; display: flex; align-items: center; padding-left: 3px; font-size: 10px; }
  .blist { display: grid; grid-template-columns: repeat(7, 103.6px); text-align: center; margin-left: 1px; color: #7b828c; }

  .right { flex: 1; min-width: 0; border-left: 1px solid #e9ecf0; position: relative; }
  .rtabs { height: 23px; display: grid; grid-template-columns: repeat(4, 1fr); text-align: center; line-height: 22px; border-bottom: 1px solid #e8ebef; box-sizing: border-box; color: #7b828c; }
  .rtabs span { position: relative; }
  .rtabs .active { color: #ff7a2a; border-bottom: 1px solid #ff9a5e; height: 23px; }
  .rd { position: absolute; left: 54px; top: 6px; width: 4px; height: 4px; border-radius: 50%; background: #ee1c25; }

  .quote { height: 167px; box-sizing: border-box; padding: 9px 6px 0 7px; border-bottom: 1px solid #e8ebef; position: relative; }
  .qname { display: flex; align-items: center; height: 18px; color: #3b4450; }
  .qname b { font-size: 15.5px; font-weight: 700; }
  .qname span { font-size: 14.6px; margin-left: 9px; white-space: nowrap; }
  .qname em { margin-left: auto; margin-right: 3px; }
  .qprice { display: flex; align-items: center; height: 25px; margin-top: 0; color: #f2383a; white-space: nowrap; }
  .big { font-size: 22px; font-weight: 700; letter-spacing: -.1px; margin-right: 5px; }
  .chg { font-size: 11.5px; margin-left: 3px; }
  .tm { color: #aeb4bc; font-size: 10px; margin-left: auto; margin-right: 2px; }
  .qicons { display: flex; align-items: center; gap: 6.5px; height: 16px; margin-top: 5px; padding-left: 1px; }
  .qspace { flex: 1; }
  .bell { width: 15px; height: 15px; background: #fdd8c4; display: flex; align-items: center; justify-content: center; }
  .fast { background: #ff6a00; color: #5d2a00; width: 47px; height: 15px; line-height: 15px; text-align: center; font-size: 11px; margin-left: 1.5px; }
  .stats { margin-top: 8px; }
  .srow { display: grid; grid-template-columns: 94px 94px 1fr; height: 15.2px; align-items: center; white-space: nowrap; }
  .cell { display: flex; align-items: center; gap: 4px; }
  .lb { color: #8a9099; font-size: 10.2px; }
  .cell b { font-size: 11px; font-weight: 700; }
  b.r { color: #f2383a; }
  b.d { color: #3b4450; }
  b.g { color: #0ba34a; }
  .collapse { position: absolute; left: 143px; top: 160px; }

  .tickhead { height: 24px; display: flex; align-items: center; gap: 8px; padding: 1px 4px 0 5px; box-sizing: border-box; color: #6f7680; }
  .tickhead span { margin-right: auto; }
  .ticks { height: 187px; border-bottom: 1px solid #e8ebef; position: relative; box-sizing: border-box; }
  .tr { display: flex; align-items: center; height: 16.86px; white-space: nowrap; font-size: 11.5px; }
  .t { width: 41px; padding-left: 2px; box-sizing: border-box; color: #7b828c; }
  .p { width: 73px; color: #f2383a; }
  .q { width: 7px; }
  .q.r { color: #f2383a; }
  .q.g { color: #0ba34a; }
  .tu, .td { width: 0; height: 0; border: 3px solid transparent; margin-left: 5px; }
  .tu { border-top: 0; border-bottom: 3px solid #f2383a; }
  .td { border-bottom: 0; border-top: 3px solid #0ba34a; }
  .l { width: 63px; color: #f2383a; margin-left: 21px; }
  .bar { width: 35px; display: flex; height: 3px; flex: none; }
  .br { background: #f2383a; height: 3px; flex: none; }
  .bg { background: #0ba34a; height: 3px; flex: none; }
  .pc { color: #5a626d; }
  .last .t, .last .p, .last .q { font-weight: 700; }
  .thumb { position: absolute; left: 288px; top: 11px; width: 6px; height: 37px; background: #dfe4ec; }
  .sq { position: absolute; left: 139px; top: 167px; width: 6px; height: 8px; background: #dfe4ec; }

  .buy { position: relative; }
  .bh { height: 23px; display: flex; align-items: center; justify-content: space-between; padding: 0 7px 0 5px; }
  .ratio { display: flex; align-items: center; height: 19px; padding-left: 6px; font-size: 10px; white-space: nowrap; }
  .rr { color: #f2383a; font-weight: 600; width: 38px; }
  .gg { color: #0ba34a; font-weight: 600; margin-left: 3px; }
  .track { display: flex; width: 207px; height: 3px; }
  .tr-r { width: 69px; background: #f24a4a; }
  .tr-g { flex: 1; background: #0ba34a; }
  .ob { display: flex; height: 34px; border-bottom: 1px solid #e8ebef; box-sizing: content-box; }
  .bid, .ask { display: flex; align-items: center; justify-content: space-between; box-sizing: border-box; }
  .bid { width: 147px; background: #fdeeee; padding: 0 5px; }
  .ask { flex: 1; background: #eaf6ee; padding: 0 5px 0 6px; }
  .ob b { font-size: 13px; color: #f2383a; font-weight: 700; }
  .ob span { color: #4d5662; font-size: 10px; }
  .info { height: 27px; line-height: 27px; padding-left: 5px; color: #6f7680; }
  .kv { display: flex; justify-content: space-between; padding: 3px 9px 0 10px; color: #7b828c; }
  .kv span:last-child { color: #5a626d; }

  .ime { position: absolute; left: 103px; top: 403px; width: 150px; height: 25px; }
  .ime-s { position: absolute; left: 0; top: 1px; width: 22px; height: 20px; background: #f2561d; color: #fff; font: 700 18px/20px "Noto Sans", sans-serif; text-align: center; z-index: 1; transform: skew(-10deg, -10deg); border-radius: 3px; }
  .ime-bar { position: absolute; left: 21px; top: 3px; width: 128px; height: 20px; background: #fff; border: 1px solid #cfe0f5; display: flex; align-items: center; gap: 9px; box-sizing: border-box; padding-left: 10px; color: #1874d2; }
  .imz { font-size: 13px; font-weight: 700; }
  .imd { font-size: 12px; font-weight: 700; }
  .shirt { margin-left: -2px; }
  .ai { font-size: 15px; font-weight: 600; margin-left: -3px; }

  .status { height: 23px; flex: none; background: #e9eef4; display: flex; align-items: center; white-space: nowrap; color: #f2383a; font-size: 11px; gap: 7.5px; padding-left: 13px; box-sizing: border-box; position: relative; z-index: 2; }
  .status b { font-weight: 700; }
  .px { display: flex; align-items: center; gap: 0; }
  .flag { margin-right: -2.5px; }
  .s-mk, .s-lb, .s-gf, .s-cn { color: #8a9099; font-size: 10px; }
  .s-lb { margin-left: 9.5px; margin-right: -3.5px; }
  .sh { margin-left: 10.5px; }
  .drop { margin-left: 11.5px; margin-right: -2.5px; }
  .s-gf { color: #7b828c; }
  .s-gn { color: #2db56b; font-size: 10.1px; margin-left: -1.5px; }
  .s-sep { width: 1px; height: 14px; background: #d7dee7; margin-left: -.5px; }
  .s-tm { color: #7b828c; font-size: 10.1px; margin-left: -2.5px; }
  .conn { margin-left: -.5px; }
  .s-cn { margin-left: -2.5px; }
</style>
